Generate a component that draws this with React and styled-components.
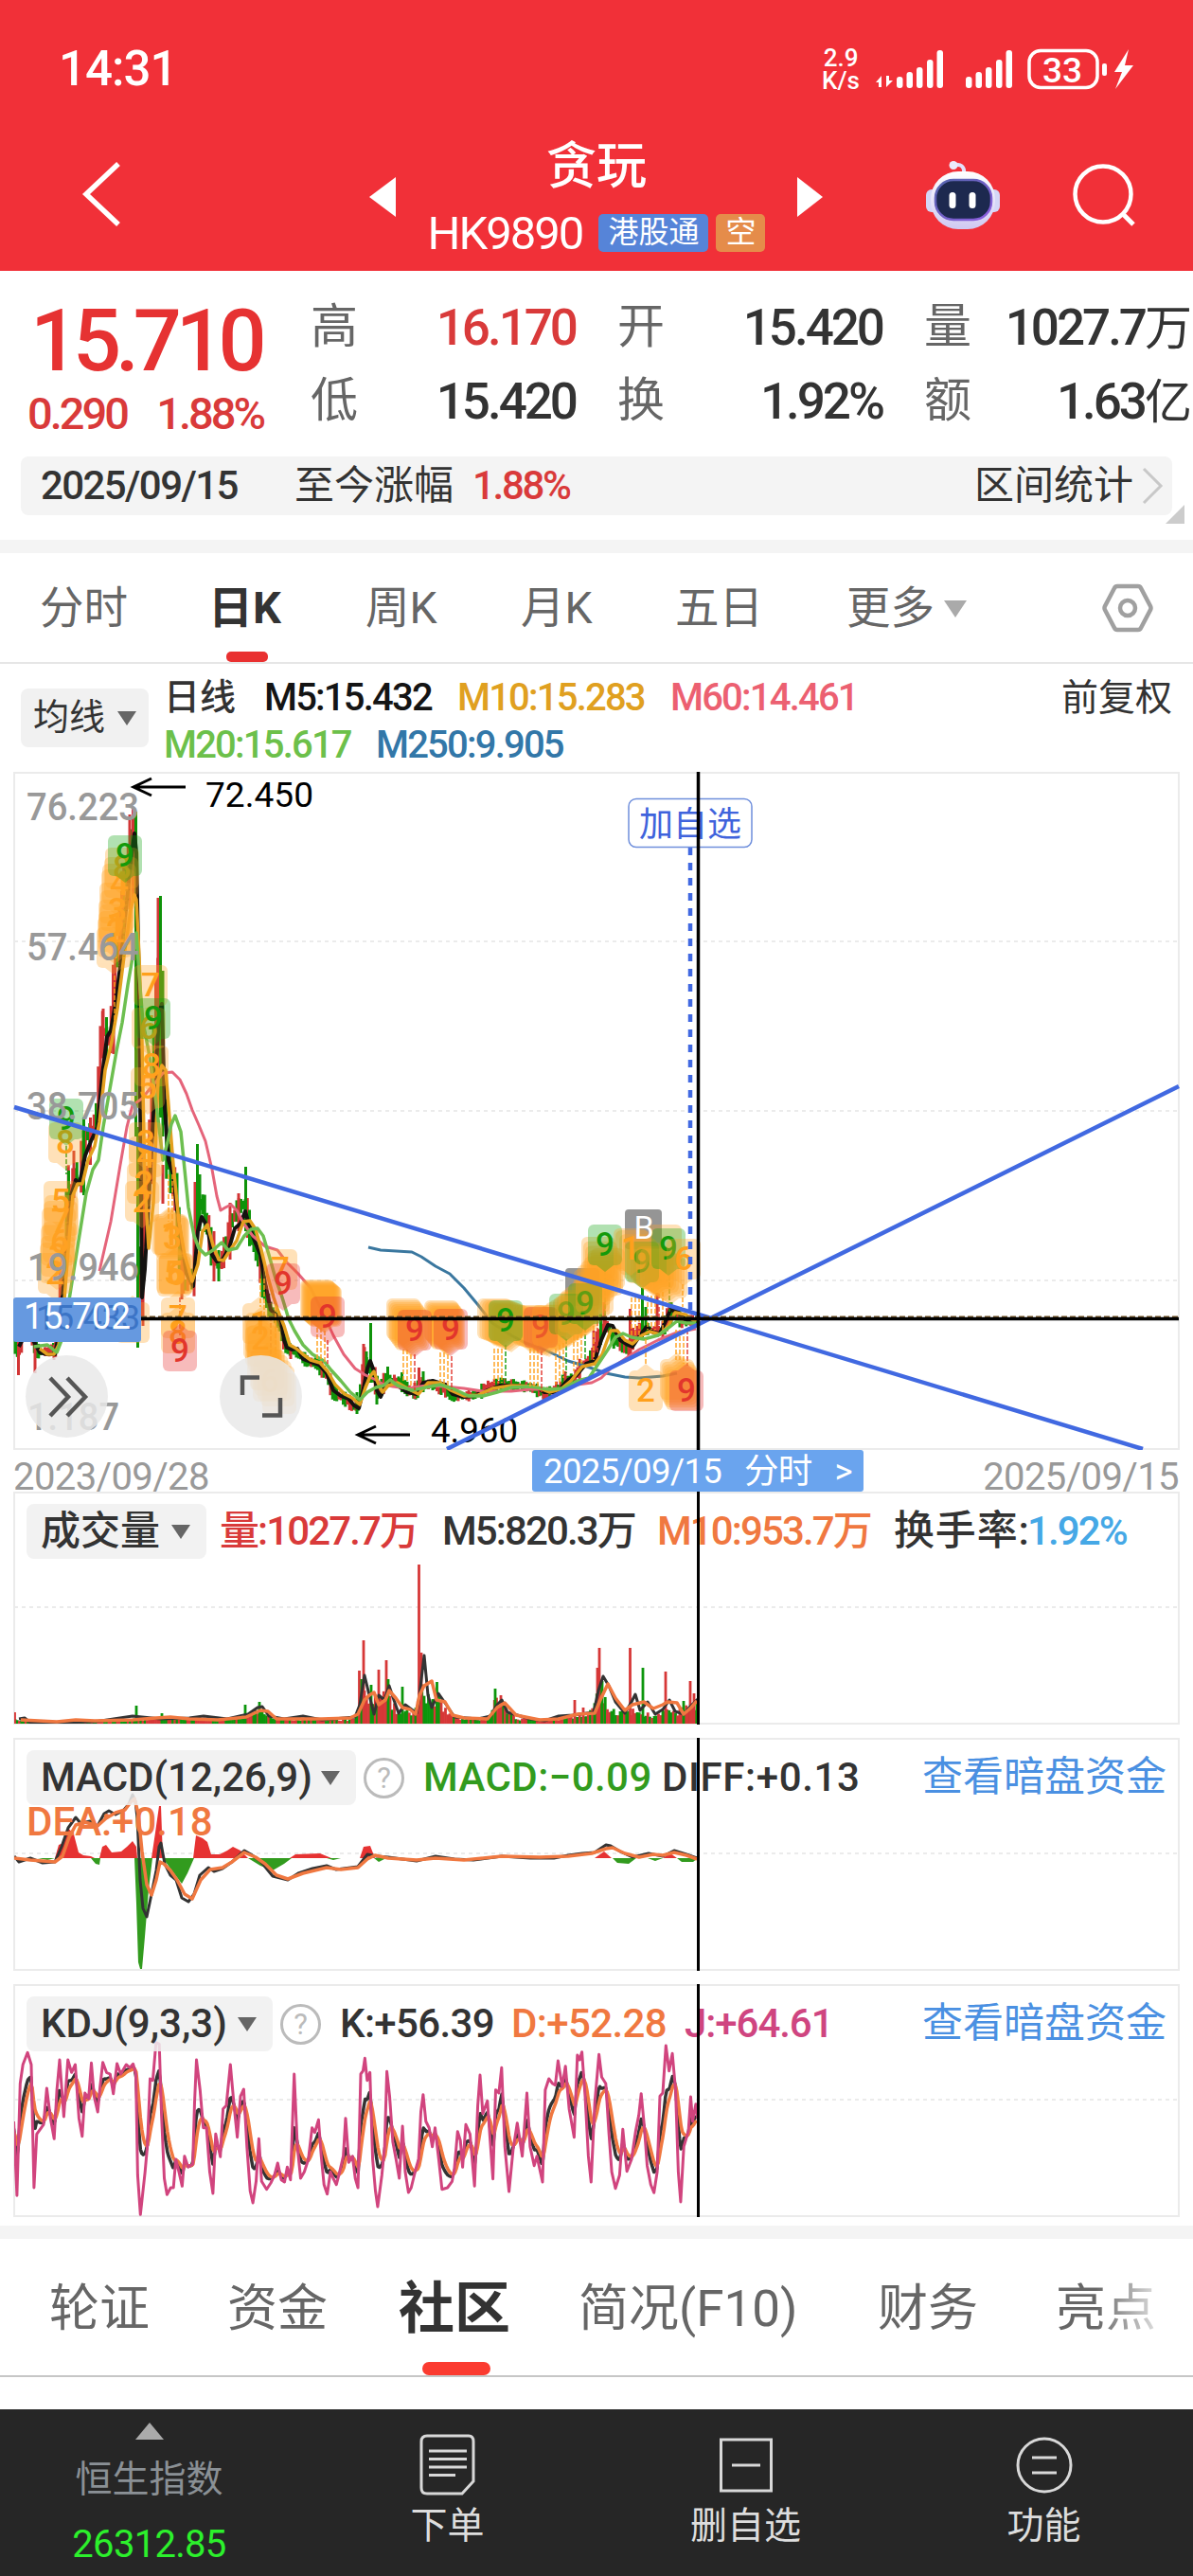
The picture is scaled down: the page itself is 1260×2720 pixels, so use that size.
import styled, { createGlobalStyle, css } from "styled-components";

const GlobalStyle = createGlobalStyle`
  * {
    box-sizing: border-box;
  }

  body {
    margin: 0;
    background: #fff;
    font-family: Roboto, "Noto Sans CJK SC", sans-serif;
    line-height: 1.2;
    color: #333;
  }
`;

/* ---------- data ---------- */

const stats = [
    { name: "高", value: "16.170", up: true },
    { name: "开", value: "15.420" },
    { name: "量", value: "1027.7", unit: "万" },
    { name: "低", value: "15.420" },
    { name: "换", value: "1.92%" },
    { name: "额", value: "1.63", unit: "亿" },
];

const periods = ["分时", "日K", "周K", "月K", "五日", "更多"];

const sections = ["轮证", "资金", "社区", "简况(F10)", "财务", "亮点"];

const axisLabels = [
    { text: "76.223", x: 28, y: 866, w: 119 },
    { text: "57.464", x: 28, y: 1014, w: 119 },
    { text: "38.705", x: 28, y: 1182, w: 119 },
    { text: "19.946", x: 29, y: 1352, w: 118 },
    { text: "1.187", x: 29, y: 1510, w: 97 },
];

const pricePath = [
    [16, 1412], [20, 1428], [24, 1410], [33, 1412], [38, 1425], [42, 1428], [50, 1427], [58, 1425],
    [61, 1405], [64, 1370], [68, 1330], [72, 1262], [76, 1258], [80, 1235], [84, 1250], [88, 1212],
    [92, 1200], [96, 1195], [100, 1190], [104, 1160], [106, 1120], [109, 1085], [112, 1095], [116, 1098],
    [119, 1075], [121, 1035], [125, 1000], [130, 955], [135, 910], [138, 892], [141, 885], [143, 910],
    [144, 1040], [145, 1330], [148, 1390], [150, 1340], [153, 1290], [157, 1240], [160, 1190], [164, 1110],
    [167, 1040], [170, 1070], [173, 1150], [176, 1210], [180, 1225], [186, 1265], [190, 1320], [195, 1358],
    [204, 1350], [208, 1285], [213, 1268], [218, 1290], [225, 1328], [233, 1335], [240, 1312], [245, 1290],
    [252, 1275], [258, 1272], [264, 1300], [272, 1322], [276, 1348], [284, 1380], [295, 1398], [300, 1415],
    [306, 1425], [315, 1430], [325, 1438], [335, 1440], [345, 1452], [352, 1470], [360, 1475], [368, 1480],
    [374, 1486], [378, 1484], [383, 1458], [386, 1436], [390, 1445], [395, 1455], [400, 1470], [408, 1457],
    [420, 1458], [430, 1467], [438, 1472], [445, 1462], [455, 1462], [470, 1468], [480, 1474], [495, 1474],
    [505, 1472], [515, 1465], [530, 1461], [545, 1463], [560, 1465], [575, 1472], [585, 1469], [592, 1464],
    [597, 1457], [605, 1457], [615, 1442], [628, 1430], [634, 1408], [640, 1398], [648, 1415], [655, 1420],
    [663, 1426], [668, 1415], [677, 1402], [690, 1405], [700, 1405], [707, 1388], [712, 1384], [720, 1395],
    [737, 1394],
];

// x, top, bottom, rising
const spikes = [
    [19.5, 1405, 1452, 1], [37, 1420, 1450, 1], [57, 1420, 1436, 1], [72.5, 1236, 1275, 0], [78, 1215, 1265, 1],
    [88.5, 1180, 1262, 0], [95.5, 1180, 1230, 1], [109, 1065, 1110, 1], [112.5, 1074, 1122, 0], [120, 1065, 1113, 1],
    [137, 860, 960, 1], [140.5, 852, 950, 1], [143.5, 857, 1200, 0], [145.5, 1190, 1423, 0], [151, 1240, 1400, 1],
    [167, 948, 1140, 1], [169.5, 946, 1180, 0], [172, 1025, 1200, 0], [172, 1230, 1271, 1], [180, 1208, 1260, 0],
    [192, 1330, 1372, 1], [206, 1248, 1340, 1], [208.5, 1208, 1310, 0], [211, 1240, 1300, 0], [226, 1300, 1353, 1],
    [231, 1320, 1353, 0], [243, 1270, 1330, 1], [252, 1260, 1300, 1], [259.5, 1232, 1300, 0], [307, 1425, 1435, 1],
    [377, 1470, 1493, 0], [384, 1419, 1470, 1], [387, 1427, 1460, 0], [391.5, 1397, 1460, 0], [398, 1455, 1483, 0],
    [409.5, 1443, 1465, 0], [424.5, 1449, 1470, 0], [438, 1460, 1477, 1], [442.5, 1444, 1465, 1], [447, 1448, 1470, 0],
    [574, 1465, 1480, 1], [597, 1448, 1462, 1], [627, 1405, 1440, 1], [634.5, 1388, 1420, 0], [638, 1375, 1400, 1],
    [665.5, 1382, 1420, 1], [666, 1418, 1430, 1], [678.5, 1360, 1412, 0], [682, 1380, 1410, 0], [694, 1365, 1412, 1],
    [709, 1375, 1400, 0],
];

const ma5 = "20,1422 25,1412 35,1415 42,1428 50,1430 58,1430 62,1410 66,1370 70,1320 75,1262 80,1246 84,1250 90,1220 96,1205 103,1190 108,1135 113,1095 117,1088 122,1060 127,1020 132,970 138,910 142,880 144,900 147,1050 150,1370 153,1340 158,1250 162,1180 168,1070 171,1060 174,1170 178,1225 183,1240 188,1285 193,1320 197,1345 204,1358 209,1300 213,1285 219,1295 224,1325 229,1332 235,1330 242,1318 248,1297 254,1292 259,1279 265,1300 270,1313 275,1325 280,1355 286,1383 293,1390 297,1400 300,1415 303,1423 308,1425 314,1424 320,1435 328,1438 337,1441 345,1450 352,1468 360,1474 368,1477 374,1484 379,1487 384,1466 388,1445 391,1437 395,1448 398,1468 402,1475 406,1466 412,1460 420,1463 430,1470 440,1472 447,1460 457,1458 470,1462 478,1472 490,1475 500,1474 515,1468 528,1463 540,1463 552,1464 565,1464 575,1470 588,1470 600,1457 609,1452 619,1440 628,1437 635,1415 642,1399 647,1400 655,1415 663,1420 668,1422 676,1410 683,1401 690,1407 697,1408 703,1395 708,1383 716,1385 725,1395 735,1394";
const ma10 = "42,1424 50,1430 57,1430 62,1420 67,1385 72,1320 77,1262 82,1250 87,1250 93,1225 100,1210 105,1185 111,1130 118,1100 124,1065 131,1010 138,960 142,945 144,950 147,1010 150,1100 153,1250 157,1318 162,1270 167,1140 171,1125 175,1130 179,1180 183,1230 189,1290 195,1325 203,1353 209,1335 214,1300 219,1293 225,1315 231,1330 236,1331 243,1320 250,1310 257,1290 264,1289 270,1298 276,1320 282,1345 289,1370 294,1385 300,1400 306,1420 313,1424 320,1430 328,1436 338,1439 346,1448 354,1462 364,1472 372,1476 380,1483 386,1465 391,1453 395,1448 399,1460 404,1470 410,1463 420,1460 432,1467 442,1472 452,1460 465,1460 476,1468 490,1474 505,1473 520,1466 540,1463 565,1464 580,1470 592,1467 603,1458 615,1443 628,1440 636,1430 645,1405 652,1405 660,1415 668,1419 678,1410 686,1406 697,1409 706,1400 713,1386 724,1388 735,1396";
const ma20 = "36,1422 50,1420 60,1428 67,1410 75,1360 83,1310 91,1260 98,1235 104,1225 109,1190 116,1150 123,1110 129,1080 135,1040 141,1005 144,985 147,1030 151,1080 157,1110 163,1150 168,1190 172,1225 176,1210 181,1187 185,1178 191,1195 195,1235 199,1275 205,1305 210,1318 217,1325 225,1320 234,1312 241,1320 250,1318 258,1305 265,1298 272,1297 278,1305 284,1325 291,1350 298,1370 305,1393 311,1405 320,1420 330,1430 342,1437 350,1447 360,1458 370,1470 380,1478 388,1470 397,1465 405,1463 412,1457 420,1463 435,1468 450,1465 465,1462 480,1467 495,1474 510,1474 525,1470 540,1465 560,1464 580,1467 595,1466 610,1458 622,1455 632,1440 642,1425 650,1412 658,1408 667,1412 680,1414 695,1410 705,1403 715,1395 725,1397 735,1397";
const ma60 = "105,1342 117,1290 127,1230 134,1190 140,1167 150,1160 158,1150 165,1142 172,1133 182,1132 190,1140 197,1155 203,1172 210,1188 217,1205 224,1235 229,1263 233,1278 238,1275 244,1272 250,1278 258,1293 267,1305 280,1316 293,1320 303,1333 315,1345 328,1360 343,1390 352,1410 363,1430 375,1445 386,1452 397,1457 405,1462 415,1464 430,1466 450,1463 470,1464 490,1466 510,1469 540,1469 560,1467 580,1467 595,1466 610,1462 625,1460 635,1455 645,1445 660,1435 675,1425 695,1415 715,1407 735,1403";
const ma250 = "389,1317 402,1320 435,1322 445,1327 460,1337 475,1345 490,1360 505,1378 520,1397 540,1410 555,1418 575,1425 600,1437 620,1443 640,1450 660,1454 675,1455 700,1453 715,1450";

// x, y, label, kind (o orange, g green, r red)
const badges = [
    [51, 1185, "8", "o"], [52, 1160, "9", "g"],
    [40, 1323, "2", "o"], [43, 1305, "3", "o"], [45, 1290, "6", "o"], [46, 1268, "7", "o"], [47, 1262, "", "o"], [46, 1247, "5", "o"],
    [102, 979, "1", "o"], [104, 962, "2", "o"], [105, 955, "1", "o"], [106, 940, "3", "o"], [107, 918, "", "o"], [108, 912, "4", "o"], [110, 905, "", "o"],
    [111, 895, "8", "o"], [114, 882, "9", "g"],
    [132, 1247, "2", "o"], [134, 1228, "2", "o"], [136, 1200, "4", "o"], [136, 1185, "3", "o"], [138, 1127, "5", "o"],
    [142, 1104, "8", "o"], [139, 1064, "6", "o"], [141, 1019, "7", "o"], [144, 1054, "9", "g"],
    [162, 1282, "1", "o"], [164, 1286, "3", "o"], [165, 1323, "5", "o"], [168, 1324, "6", "o"],
    [170, 1370, "7", "o"], [170, 1386, "8", "o"], [172, 1405, "9", "r"],
    [122, 1375, "", "o"],
    [256, 1376, "1", "o"], [257, 1392, "2", "o"], [259, 1400, "", "o"], [261, 1415, "", "o"], [264, 1425, "", "o"], [267, 1437, "6", "o"], [277, 1450, "", "o"],
    [278, 1319, "7", "o"], [281, 1334, "9", "r"],
];

// overlapping runs of badges: from x, y to x, y, how many
const runs = [
    [44, 1275, 42, 1312, 3], [105, 932, 103, 968, 3], [163, 1284, 160, 1282, 2], [166, 1326, 168, 1323, 2],
    [259, 1386, 262, 1406, 4], [265, 1425, 275, 1442, 4],
    [317, 1351, 325, 1358, 9], [408, 1371, 417, 1383, 7], [448, 1373, 455, 1382, 7],
    [504, 1371, 522, 1378, 8], [542, 1378, 562, 1383, 8], [568, 1380, 596, 1362, 8], [592, 1362, 612, 1345, 6],
    [606, 1340, 624, 1318, 6], [614, 1306, 622, 1325, 5], [650, 1299, 662, 1312, 4], [666, 1312, 690, 1328, 9],
    [697, 1435, 703, 1446, 5],
];

const topBadges = [
    [328, 1369, "9", "r"], [420, 1383, "9", "r"], [458, 1382, "9", "r"], [516, 1373, "9", "g"], [553, 1380, "9", "r"], [562, 1378, "", "o"],
    [580, 1366, "9", "g"], [586, 1368, "", "o"], [590, 1364, "", "o"], [600, 1355, "9", "g"], [608, 1343, "", "o"], [621, 1293, "9", "g"],
    [660, 1311, "9", "g"], [648, 1297, "1", "o"], [672, 1316, "", "o"], [676, 1318, "", "o"], [684, 1293, "", "o"], [688, 1297, "9", "g"], [704, 1308, "6", "o"],
    [664, 1447, "2", "o"], [707, 1447, "9", "r"],
];

// dashed stems that tie a badge to its candle: x, from, to, kind
const stems = [
    [70, 1210, 1240, "g"], [121, 1030, 1080, "o"], [131, 932, 1010, "g"], [190, 1370, 1410, "r"], [178, 1240, 1290, "o"], [182, 1240, 1290, "o"],
    [275, 1350, 1380, "o"], [279, 1350, 1390, "o"], [286, 1390, 1430, "r"], [291, 1380, 1430, "o"],
    [335, 1402, 1436, "o"], [339, 1402, 1438, "o"], [343, 1405, 1440, "o"], [346, 1415, 1440, "r"],
    [426, 1425, 1460, "o"], [430, 1425, 1460, "o"], [434, 1430, 1465, "o"], [438, 1430, 1468, "r"],
    [465, 1428, 1460, "o"], [469, 1428, 1462, "o"], [473, 1430, 1464, "o"], [477, 1432, 1468, "r"],
    [522, 1424, 1460, "o"], [526, 1424, 1460, "o"], [530, 1424, 1460, "o"], [534, 1420, 1460, "g"],
    [560, 1424, 1464, "o"], [564, 1424, 1464, "o"], [568, 1424, 1464, "o"], [572, 1426, 1470, "r"],
    [587, 1424, 1462, "o"], [591, 1420, 1460, "o"], [595, 1418, 1455, "o"], [598, 1414, 1450, "g"],
    [606, 1410, 1448, "o"], [610, 1410, 1444, "o"], [614, 1408, 1440, "o"], [618, 1402, 1436, "g"],
    [627, 1400, 1436, "o"], [631, 1395, 1430, "r"], [639, 1342, 1390, "g"],
    [667, 1370, 1410, "o"], [671, 1370, 1410, "o"], [675, 1370, 1410, "o"], [684, 1368, 1404, "o"], [688, 1368, 1404, "o"],
    [692, 1368, 1404, "o"], [696, 1366, 1404, "r"], [700, 1364, 1404, "o"], [707, 1347, 1385, "g"], [721, 1356, 1380, "o"],
    [682, 1414, 1440, "o"], [714, 1404, 1436, "o"], [718, 1404, 1436, "o"], [722, 1404, 1440, "o"], [726, 1404, 1442, "r"],
];

const volumeEnvelope = [
    [15, 4], [60, 2.5], [140, 4], [180, 6], [240, 5], [262, 8], [275, 14], [283, 9], [292, 5], [370, 4], [377, 10], [383, 32], [392, 26],
    [400, 26], [410, 30], [420, 12], [438, 13], [446, 34], [455, 26], [463, 26], [472, 11], [480, 6], [515, 5], [524, 24], [534, 16],
    [545, 5], [590, 5], [610, 9], [627, 14], [633, 42], [641, 20], [650, 12], [672, 13], [692, 8], [702, 14], [715, 12], [725, 16], [737, 22],
];
const volumeSpikes = [
    [15.5, 12, 1], [144, 19, 0], [171, 11, 0], [259, 20, 0], [274, 23, 0], [379.5, 56, 1], [382, 47, 0], [384, 88, 1], [392, 41, 0],
    [400, 57, 1], [408, 67, 1], [410, 47, 0], [425, 39, 0], [442.5, 168, 1], [445, 75, 1], [461.5, 44, 0], [523, 37, 0],
    [529, 30, 1], [607, 25, 1], [616, 17, 1], [631, 59, 1], [633, 80, 1], [636, 45, 0], [665.5, 80, 1], [679, 59, 0],
    [703, 55, 1], [722, 24, 0], [729, 45, 1], [733, 32, 1],
];
const volumeM5 = "20,1815 26,1814 32,1819 60,1819 100,1818 140,1812 150,1813 170,1815 200,1814 215,1812 240,1815 262,1810 272,1803 277,1802 284,1812 300,1815 320,1812 340,1816 375,1813 380,1800 385,1769 390,1790 395,1810 400,1790 406,1795 411,1780 416,1795 421,1809 428,1800 440,1809 443,1790 448,1748 452,1790 456,1803 463,1788 470,1798 480,1813 505,1815 518,1812 525,1800 530,1795 536,1808 560,1815 575,1817 590,1812 605,1811 627,1808 632,1785 637,1770 643,1780 650,1797 660,1809 667,1797 671,1789 676,1806 684,1797 692,1810 700,1805 707,1795 713,1807 722,1810 728,1803 737,1794";
const volumeM10 = "22,1816 60,1818 80,1816 100,1817 140,1816 165,1814 180,1813 200,1815 230,1816 260,1813 275,1806 283,1807 292,1815 310,1815 340,1815 370,1814 378,1810 385,1795 390,1790 395,1787 400,1800 407,1795 411,1785 418,1793 425,1803 433,1805 439,1810 443,1790 448,1780 456,1775 461,1795 470,1797 478,1811 490,1814 515,1815 525,1803 533,1798 545,1811 570,1816 590,1815 610,1810 628,1809 634,1795 642,1778 650,1793 660,1806 668,1800 680,1797 690,1804 700,1800 705,1797 715,1798 722,1810 730,1803 736,1796";

const macdUp = "58,1962 62,1948 67,1946 72,1930 78,1937 83,1956 88,1959 96,1960 100,1962 105,1962 108,1950 112,1948 118,1956 128,1955 134,1950 140,1944 144,1950 145,1962 160,1962 164,1935 168,1907 170,1907 172,1962 204,1962 207,1938 214,1941 219,1945 223,1958 232,1958 240,1954 246,1950 254,1954 262,1962 306,1962 312,1958 338,1957 350,1962 380,1962 384,1950 391,1949 396,1962 628,1962 638,1955 646,1962 700,1962 708,1957 715,1962";
const macdDown = "40,1962 50,1964 58,1962 96,1962 101,1968 105,1969 106,1962 142,1962 144,2010 146,2072 148,2079 150,2079 153,2045 157,1995 161,1962 172,1962 180,1973 192,1989 198,1978 205,1962 262,1962 275,1970 288,1975 300,1968 308,1962 345,1962 352,1964 360,1962 395,1962 400,1966 408,1962 647,1962 652,1967 664,1968 672,1962 684,1962 692,1965 700,1962 715,1962 720,1966 732,1966 737,1962";
const diffLine = "15,1960 20,1966 32,1962 45,1967 58,1966 65,1950 72,1930 80,1919 85,1925 95,1923 103,1928 110,1915 115,1912 122,1916 130,1912 136,1905 140,1895 143,1902 145,1920 148,1985 151,2015 155,2024 160,2000 165,1975 168,1950 170,1946 174,1968 180,1980 186,1985 192,2004 199,2008 205,2000 211,1980 220,1972 226,1976 235,1973 245,1966 258,1954 265,1958 275,1965 288,1981 304,1985 315,1978 330,1973 345,1970 355,1974 378,1971 388,1958 398,1960 410,1961 425,1963 440,1965 460,1960 480,1963 500,1964 530,1960 560,1962 585,1962 600,1959 615,1957 628,1956 640,1948 645,1949 655,1955 668,1961 685,1957 700,1960 712,1954 725,1958 736,1962";
const deaLine = "15,1962 32,1964 58,1966 66,1960 73,1940 80,1927 90,1924 103,1928 112,1920 122,1914 132,1911 138,1903 142,1899 146,1915 150,1955 155,1990 160,2001 165,1985 169,1966 173,1968 180,1975 187,1985 195,2000 203,2005 212,1985 222,1974 235,1972 245,1966 258,1956 270,1961 280,1968 292,1980 304,1984 320,1978 345,1972 360,1974 378,1972 388,1963 396,1959 410,1962 440,1964 460,1962 490,1964 530,1960 570,1961 600,1960 625,1957 640,1952 647,1951 660,1957 675,1961 690,1958 700,1959 712,1956 725,1959 736,1963";

const jRaw = "30,480 37,715 44,360 50,300 60,262 68,300 74,690 80,520 95,490 102,375 110,470 118,535 124,380 130,285 139,465 148,285 156,325 164,300 172,470 179,527 185,390 193,408 199,295 205,400 213,450 218,370 224,293 232,325 240,330 247,392 255,297 263,330 275,300 283,310 290,298 296,330 300,650 306,775 316,640 321,560 327,345 333,350 340,230 347,235 352,460 358,660 364,712 372,690 378,690 383,600 390,640 397,685 402,590 410,625 420,615 424,420 428,285 436,380 443,500 450,500 457,640 464,708 470,520 480,592 486,440 493,430 502,300 510,430 517,530 524,400 531,378 538,560 545,700 551,738 558,670 564,535 570,670 581,695 590,675 598,650 605,612 613,665 620,672 626,625 633,665 641,330 648,560 655,660 663,640 672,600 680,500 686,515 694,475 700,590 706,680 713,710 720,640 726,660 733,680 740,640 748,590 753,470 760,610 768,590 774,660 780,690 786,330 791,320 795,280 800,350 806,325 812,600 818,700 823,750 832,650 838,560 843,322 849,400 856,545 863,600 870,660 877,495 883,640 890,705 896,690 906,630 912,600 917,450 922,395 928,480 935,500 942,560 948,500 956,600 963,695 975,690 985,670 990,630 997,512 1003,540 1008,625 1015,490 1024,520 1034,685 1041,430 1046,333 1052,455 1062,415 1068,540 1074,662 1080,380 1087,390 1093,310 1100,560 1109,702 1118,570 1127,485 1138,590 1148,390 1155,560 1164,620 1170,590 1182,672 1188,380 1196,345 1204,360 1210,365 1216,288 1225,370 1232,305 1240,440 1251,530 1258,270 1263,285 1268,260 1275,400 1282,590 1288,672 1296,420 1305,268 1311,340 1320,360 1327,520 1333,640 1341,692 1350,650 1357,505 1366,638 1376,600 1385,510 1392,460 1397,392 1404,500 1410,620 1418,680 1425,706 1432,640 1438,400 1444,390 1451,240 1458,320 1465,265 1472,380 1478,640 1483,735 1490,560 1500,510 1505,402 1509,480 1516,425 1520,470";

/* ---------- helpers ---------- */

const noise = (n) => {
    const v = Math.sin(n * 12.9898) * 43758.5453;
    return v - Math.floor(v);
};

const at = (points, x) => {
    for (let i = 1; i < points.length; i++) {
        if (x <= points[i][0]) {
            const [x0, y0] = points[i - 1];
            const [x1, y1] = points[i];
            return y0 + ((x - x0) / (x1 - x0)) * (y1 - y0);
        }
    }
    return points[points.length - 1][1];
};

const candles = [];
for (let x = 16; x < 737; x += 2.25) {
    const y = at(pricePath, x);
    const slope = at(pricePath, x + 2) - at(pricePath, x - 2);
    const reach = Math.min(45, 4 + Math.abs(slope) * 0.55) * (0.6 + noise(x));
    const up = slope === 0 ? noise(x) > 0.5 : slope < 0 ? noise(x + 3) > 0.25 : noise(x + 3) > 0.72;
    candles.push([x, Math.max(y - reach, 856), y + reach * 0.9, up ? 1 : 0]);
}

const volumeBars = [];
for (let x = 16; x < 737; x += 2.25) {
    const h = at(volumeEnvelope, x) * (0.65 + noise(x) * 0.6);
    volumeBars.push([x, h, noise(x * 2) > 0.5 ? 1 : 0]);
}

const jPoints = jRaw.split(" ").map((p) => p.split(",").map(Number));
const toPoint = (x, y) => `${(x / 2.063).toFixed(1)},${(2080 + y / 3).toFixed(1)}`;
const jLine = jPoints.map(([x, y]) => toPoint(x, y)).join(" ");
const kPoints = [];
const dPoints = [];
let d = 520;
for (let x = 30; x <= 1520; x += 3.1) {
    const j = at(jPoints, x);
    d = (6 * d + j) / 7;
    dPoints.push(toPoint(x, d));
    kPoints.push(toPoint(x, (j + 2 * d) / 3));
}

const badgeColors = {
    o: { fill: "#ffa426", opacity: 0.32, text: "#ffa01c" },
    g: { fill: "#10a510", opacity: 0.32, text: "#139a0a" },
    r: { fill: "#e93030", opacity: 0.32, text: "#e2352c" },
};

/* ---------- chart pieces ---------- */

const Badge = ({ x, y, label, kind }) => {
    // the tip points at the candle the badge belongs to
    const below = y > at(pricePath, x + 18);
    const tip = below
        ? `M${x + 9} ${y}L${x + 18} ${y - 7}L${x + 27} ${y}Z`
        : `M${x + 9} ${y + 43}L${x + 18} ${y + 50}L${x + 27} ${y + 43}Z`;

    return (
        <g>
            <g fill={badgeColors[kind].fill} opacity={badgeColors[kind].opacity}>
                <rect x={x} y={y} width="36" height="43" rx="6" />
                <path d={tip} />
            </g>
            {label && (
                <text x={x + 18} y={y + 33} textAnchor="middle" fontSize="35" fontWeight="500" fill={badgeColors[kind].text}>
                    {label}
                </text>
            )}
        </g>
    );
};

const Line = ({ points, color, width = 3 }) => (
    <polyline points={points} fill="none" stroke={color} strokeWidth={width} strokeLinejoin="round" />
);

const PriceChart = () => (
    <ChartSvg viewBox="0 815 1260 716">
        <rect x="15" y="816" width="1230" height="714" fill="none" stroke="#ebebeb" strokeWidth="2" />
        {[994, 1173, 1352].map((y) => (
            <line key={y} x1="15" x2="1245" y1={y} y2={y} stroke="#ebebeb" strokeWidth="2" strokeDasharray="4 4" />
        ))}
        {[...candles, ...spikes].map(([x, top, bottom, up], i) => (
            <rect key={i} x={x - 1.5} y={top} width="3" height={bottom - top} fill={up ? "#d23535" : "#0f930a"} />
        ))}
        <Line points={ma5} color="#141210" width={4} />
        <Line points={ma250} color="#3a779f" />
        <Line points={ma60} color="#e5647a" />
        <Line points={ma10} color="#e3a01f" width={3.5} />
        <Line points={ma20} color="#6dbf50" width={3.5} />
        <rect x="597" y="1339" width="36" height="40" rx="4" fill="#959595" />
        {stems.map(([x, y1, y2, kind], i) => (
            <line key={i} x1={x} x2={x} y1={y1} y2={y2} stroke={badgeColors[kind].text} strokeWidth="1.4" strokeDasharray="5 2" />
        ))}
        {badges.map(([x, y, label, kind], i) => (
            <Badge key={i} x={x} y={y} label={label} kind={kind} />
        ))}
        <rect x="660" y="1277" width="39" height="42" rx="4" fill="#959595" />
        {runs.map(([x0, y0, x1, y1, count], r) =>
            Array.from({ length: count }, (_, i) => (
                <Badge key={`${r}-${i}`} x={x0 + ((x1 - x0) * i) / (count - 1)} y={y0 + ((y1 - y0) * i) / (count - 1)} kind="o" />
            ))
        )}
        {topBadges.map(([x, y, label, kind], i) => (
            <Badge key={i} x={x} y={y} label={label} kind={kind} />
        ))}
        <text x="680" y="1308" textAnchor="middle" fontSize="34" fill="#fff">B</text>

        {axisLabels.map(({ text, x, y, w }) => (
            <text key={text} x={x} y={y} textLength={w} lengthAdjust="spacingAndGlyphs" fontSize="41" fontWeight="500" fill="#999">
                {text}
            </text>
        ))}
        <rect x="14" y="1370" width="135" height="47" rx="3" fill="#6699e0" />
        <text x="38" y="1404" textLength="110" lengthAdjust="spacingAndGlyphs" fontSize="37" fill="#3b74c6">15.433</text>
        <text x="25" y="1403" textLength="113" lengthAdjust="spacingAndGlyphs" fontSize="38" fill="#fff">15.702</text>

        <g stroke="#000" strokeWidth="3" fill="none">
            <path d="M196 831H141M160 822L141 831L160 840" />
            <path d="M433 1515H378M397 1506L378 1515L397 1524" />
        </g>
        <text x="217" y="852" textLength="114" lengthAdjust="spacingAndGlyphs" fontSize="37" fill="#000">72.450</text>
        <text x="455" y="1523" textLength="92" lengthAdjust="spacingAndGlyphs" fontSize="37" fill="#000">4.960</text>

        <line x1="729" x2="729" y1="895" y2="1387" stroke="#4169e1" strokeWidth="4.5" strokeDasharray="8 8" />
        <rect x="664" y="843.5" width="130" height="51" rx="8" fill="#fff" fillOpacity="0.8" stroke="#6f8fdc" strokeWidth="1.5" />
        <text x="729" y="883" textAnchor="middle" fontSize="36" fill="#3f63dc">加自选</text>

        <path d="M15 1169L1207 1530M472 1530L1245 1147" stroke="#4169e1" strokeWidth="4.5" fill="none" />
        <path d="M149 1391H1245" stroke="#76592c" strokeWidth="3" strokeDasharray="6 3" />
        <path d="M149 1392.5H1245M737.5 815V1531" stroke="#000" strokeWidth="3.5" />

        <circle cx="70.5" cy="1474.5" r="43.5" fill="#e8e8e8" opacity="0.84" />
        <circle cx="275.5" cy="1474.5" r="43.5" fill="#e8e8e8" opacity="0.84" />
        <g fill="none" stroke="#555" strokeWidth="4.5">
            <path d="M53 1455L72 1475L53 1495M71 1455L90 1475L71 1495" />
            <path d="M256 1473V1454.500H274M296 1476V1494.500H277" />
        </g>
    </ChartSvg>
);

const VolumeChart = () => (
    <PanelSvg viewBox="15 1575 1230 245">
        <line x1="15" x2="1245" y1="1697" y2="1697" stroke="#ebebeb" strokeWidth="2" strokeDasharray="4 4" />
        {[...volumeBars, ...volumeSpikes].map(([x, h, up], i) => (
            <rect key={i} x={x - 1.4} y={1820 - h} width="2.8" height={h} fill={up ? "#d63737" : "#0c960c"} />
        ))}
        <Line points={volumeM5} color="#333" />
        <Line points={volumeM10} color="#f07840" width={3.5} />
    </PanelSvg>
);

const MacdChart = () => (
    <PanelSvg viewBox="15 1835 1230 245">
        <line x1="15" x2="1245" y1="1957" y2="1957" stroke="#ebebeb" strokeWidth="2" strokeDasharray="4 4" />
        <polygon points={macdUp} fill="#e63232" />
        <polygon points={macdDown} fill="#329b1e" />
        <Line points={diffLine} color="#333" />
        <Line points={deaLine} color="#f07840" width={3.5} />
    </PanelSvg>
);

const KdjChart = () => (
    <PanelSvg viewBox="15 2095 1230 245">
        <line x1="15" x2="1245" y1="2217" y2="2217" stroke="#ebebeb" strokeWidth="2" strokeDasharray="4 4" />
        <Line points={kPoints.join(" ")} color="#333" width={3.5} />
        <Line points={dPoints.join(" ")} color="#f07840" width={3.5} />
        <Line points={jLine} color="#d1447e" />
    </PanelSvg>
);

/* ---------- icons ---------- */

const StatusIcons = () => (
    <svg width="276" height="46" viewBox="922 49 276 46">
        <g fill="#fff">
            <path d="M931 91V79L925 86H928V91ZM936 79V91L943 84H939V79Z" />
            {[[947, 80], [957.500, 75], [968, 70], [979, 62], [989.500, 52]].map(([x, y]) => (
                <rect key={x} x={x} y={y} width="6.5" height={92 - y} rx="3" />
            ))}
            {[[1020, 80], [1030.500, 75], [1041, 70], [1052, 62], [1062.500, 52]].map(([x, y]) => (
                <rect key={x} x={x} y={y} width="6.5" height={92 - y} rx="3" />
            ))}
            <rect x="1164" y="66" width="5" height="13" rx="2" />
            <path d="M1192 51L1177 75H1185L1178 93L1197 68H1188Z" />
        </g>
        <rect x="1087" y="52.500" width="72" height="39" rx="12" fill="none" stroke="#fff" strokeWidth="3.5" />
        <text x="1122" y="86" textAnchor="middle" fontSize="37" fontWeight="500" fill="#fff" textLength="42" lengthAdjust="spacingAndGlyphs">33</text>
    </svg>
);

const RobotIcon = () => (
    <svg width="82" height="76" viewBox="976 167 82 76">
        <defs>
            <linearGradient id="shell" x1="0" y1="0" x2="0" y2="1">
                <stop offset="0" stopColor="#fff" />
                <stop offset="1" stopColor="#cfc9f2" />
            </linearGradient>
            <linearGradient id="visor" x1="0" y1="0" x2="1" y2="1">
                <stop offset="0" stopColor="#5566ad" />
                <stop offset="1" stopColor="#8d5ce0" />
            </linearGradient>
        </defs>
        <path d="M1018 182C1019 175 1014 171 1008 174" fill="none" stroke="#e3e0fa" strokeWidth="4" />
        <circle cx="1007" cy="173.500" r="4.500" fill="#eceafb" />
        <rect x="978" y="199" width="13" height="24" rx="6" fill="#d4d6f7" />
        <rect x="1043" y="199" width="13" height="24" rx="6" fill="#d4d6f7" />
        <rect x="983" y="180" width="68" height="61" rx="29" fill="url(#shell)" />
        <rect x="988" y="189" width="59" height="42" rx="19" fill="#1d294f" stroke="url(#visor)" strokeWidth="2.500" />
        <rect x="1002.500" y="202" width="7" height="17" rx="3.500" fill="#fff" />
        <rect x="1023.500" y="202" width="7" height="17" rx="3.500" fill="#fff" />
    </svg>
);

/* ---------- page ---------- */

function App() {
    return (
        <Page>
            <GlobalStyle />
            <Header>
                <StatusBar>
                    <Clock>14:31</Clock>
                    <StatusRight>
                        <Speed>
                            <span>2.9</span>
                            <span>K/s</span>
                        </Speed>
                        <StatusIcons />
                    </StatusRight>
                </StatusBar>
                <NavBar>
                    <svg width="46" height="72" viewBox="85 169 46 72">
                        <path d="M125 173L91 205L125 237" fill="none" stroke="#fff" strokeWidth="5.5" />
                    </svg>
                    <Stock>
                        <svg width="28" height="42" viewBox="0 0 28 42"><path d="M0 21L28 0V42Z" fill="#fff" /></svg>
                        <StockInfo>
                            <StockName>贪玩</StockName>
                            <StockCode>
                                <span>HK9890</span>
                                <Tag $color="#5684d8">港股通</Tag>
                                <Tag $color="#e58c4a">空</Tag>
                            </StockCode>
                        </StockInfo>
                        <svg width="28" height="42" viewBox="0 0 28 42"><path d="M27 21L0 0V42Z" fill="#fff" /></svg>
                    </Stock>
                    <NavActions>
                        <RobotIcon />
                        <svg width="68" height="68" viewBox="1132 174 68 68">
                            <circle cx="1165" cy="207" r="29.500" fill="none" stroke="#fff" strokeWidth="4.500" />
                            <path d="M1186 228L1197 239" stroke="#fff" strokeWidth="5" />
                        </svg>
                    </NavActions>
                </NavBar>
            </Header>

            <Quote>
                <PriceBlock>
                    <Price>15.710</Price>
                    <Change>
                        <span>0.290</span>
                        <span>1.88%</span>
                    </Change>
                </PriceBlock>
                <Stats>
                    {stats.map(({ name, value, unit, up }) => (
                        <Stat key={name}>
                            <StatName>{name}</StatName>
                            <StatValue $up={up}>
                                {value}
                                {unit && <Unit>{unit}</Unit>}
                            </StatValue>
                        </Stat>
                    ))}
                </Stats>
            </Quote>

            <RangeBar>
                <RangeDate>2025/09/15</RangeDate>
                <RangeLabel>至今涨幅</RangeLabel>
                <RangeRate>1.88%</RangeRate>
                <RangeLink>区间统计</RangeLink>
                <svg width="24" height="40" viewBox="0 0 24 40">
                    <path d="M2 2L20 20L2 38" fill="none" stroke="#c8c8c8" strokeWidth="3" />
                </svg>
                <Corner />
            </RangeBar>

            <Band />

            <Periods>
                {periods.map((name) => (
                    <Period key={name} $active={name === "日K"}>
                        {name}
                        {name === "更多" && <Caret $color="#aaa" $size={24} />}
                    </Period>
                ))}
                <svg width="54" height="52" viewBox="0 0 54 52">
                    <g fill="none" stroke="#a0a0a0" strokeWidth="4.5">
                        <path d="M16 3H38Q40 3 41 5L51 24Q52 26 51 28L41 47Q40 49 38 49H16Q14 49 13 47L3 28Q2 26 3 24L13 5Q14 3 16 3Z" />
                        <circle cx="27" cy="26" r="8" />
                    </g>
                </svg>
            </Periods>

            <Averages>
                <AverageChip>
                    均线
                    <Caret $color="#666" $size={20} />
                </AverageChip>
                <Legend>
                    <LegendRow>
                        <Reading $w={106} $size={38} $ls={0}>日线</Reading>
                        <Reading $w={204} $color="#141414">M5:15.432</Reading>
                        <Reading $w={225} $color="#e0a020">M10:15.283</Reading>
                        <Reading $color="#ec6071">M60:14.461</Reading>
                    </LegendRow>
                    <LegendRow>
                        <Reading $w={224} $color="#6cc04a">M20:15.617</Reading>
                        <Reading $color="#3277a8">M250:9.905</Reading>
                    </LegendRow>
                </Legend>
                <Adjust>前复权</Adjust>
            </Averages>

            <PriceChart />

            <Dates>
                <StartDate>2023/09/28</StartDate>
                <DateTag>
                    <span>2025/09/15</span>
                    <span>分时</span>
                    <span>&gt;</span>
                </DateTag>
                <EndDate>2025/09/15</EndDate>
            </Dates>

            <Panel>
                <VolumeChart />
                <PanelHead>
                    <Chip $w={190}>
                        成交量
                        <Caret $color="#666" $size={20} />
                    </Chip>
                    <Reading $ml={14} $w={235} $size={42} $color="#d93a3a">量:1027.7万</Reading>
                    <Reading $w={227} $size={42}>M5:820.3万</Reading>
                    <Reading $w={250} $size={42} $color="#f07840">M10:953.7万</Reading>
                    <Reading $w={141} $size={43} $ls={0.02}>换手率:</Reading>
                    <Reading $size={42} $color="#45a8e6">1.92%</Reading>
                </PanelHead>
                <Cursor />
            </Panel>

            <Panel>
                <MacdChart />
                <PanelHead>
                    <Chip $w={348}>
                        MACD(12,26,9)
                        <Caret $color="#666" $size={20} />
                    </Chip>
                    <HelpMark>?</HelpMark>
                    <Reading $ml={20} $w={252} $size={42} $ls={0.01} $color="#329b1e">MACD:−0.09</Reading>
                    <Reading $size={42} $ls={0.015}>DIFF:+0.13</Reading>
                    <MoneyLink>查看暗盘资金</MoneyLink>
                </PanelHead>
                <SecondLine>DEA:+0.18</SecondLine>
                <Cursor />
            </Panel>

            <Panel>
                <KdjChart />
                <PanelHead>
                    <Chip $w={260}>
                        KDJ(9,3,3)
                        <Caret $color="#666" $size={20} />
                    </Chip>
                    <HelpMark>?</HelpMark>
                    <Reading $ml={20} $w={181} $size={42} $ls={-0.015}>K:+56.39</Reading>
                    <Reading $w={183} $size={42} $ls={-0.015} $color="#f07840">D:+52.28</Reading>
                    <Reading $size={42} $ls={-0.025} $color="#cf4580">J:+64.61</Reading>
                    <MoneyLink>查看暗盘资金</MoneyLink>
                </PanelHead>
                <Cursor />
            </Panel>

            <BottomBand />

            <Sections>
                {sections.map((name) => (
                    <Section key={name} $active={name === "社区"} $faded={name === "亮点"}>
                        {name}
                    </Section>
                ))}
            </Sections>

            <BottomBar>
                <IndexCell>
                    <UpMark />
                    <IndexName>恒生指数</IndexName>
                    <IndexValue>26312.85</IndexValue>
                </IndexCell>
                <Action>
                    <svg width="60" height="66" viewBox="0 0 60 66" fill="none" stroke="#d8d8d8" strokeWidth="3">
                        <path d="M8 2H52Q57 2 57 8V50L45 63H8Q2 63 2 57V8Q2 2 8 2Z" />
                        <path d="M10 18H50M10 26.500H50M10 35H50M10 43.500H38" />
                    </svg>
                    <span>下单</span>
                </Action>
                <Action>
                    <svg width="60" height="66" viewBox="0 0 60 66" fill="none" stroke="#d8d8d8" strokeWidth="3">
                        <path d="M3.500 6H56.500V60H3.500ZM15 33H45" />
                    </svg>
                    <span>删自选</span>
                </Action>
                <Action>
                    <svg width="60" height="66" viewBox="0 0 60 66" fill="none" stroke="#d8d8d8" strokeWidth="3">
                        <circle cx="30" cy="33" r="28" />
                        <path d="M17 25H43M17 41H43" />
                    </svg>
                    <span>功能</span>
                </Action>
            </BottomBar>
        </Page>
    );
}

const Page = styled.div`
  width: 1260px;
  height: 2720px;
  overflow: hidden;
  display: flex;
  flex-direction: column;
  background: #fff;

  > * {
    flex-shrink: 0;
  }
`;

const Header = styled.header`
  height: 286px;
  background: #f13038;
  color: #fff;
`;

const StatusBar = styled.div`
  height: 146px;
  padding: 0 62px 0 62px;
  display: flex;
  align-items: center;
  justify-content: space-between;
`;

const Clock = styled.span`
  font-size: 51px;
  font-weight: 500;
  letter-spacing: -1px;
`;

const StatusRight = styled.div`
  display: flex;
  align-items: center;
  gap: 14px;
`;

const Speed = styled.div`
  display: flex;
  flex-direction: column;
  align-items: center;
  font-size: 26px;
  font-weight: 500;
  line-height: 24px;
`;

const NavBar = styled.div`
  height: 140px;
  padding: 0 60px 0 85px;
  display: grid;
  grid-template-columns: 305px 480px 1fr;
  align-items: center;

  > svg {
    margin-top: -22px;
  }
`;

const Stock = styled.div`
  height: 140px;
  display: flex;
  justify-content: space-between;

  > svg {
    margin-top: 41px;
  }
`;

const StockInfo = styled.div`
  display: flex;
  flex-direction: column;
  align-items: center;
`;

const StockName = styled.div`
  height: 60px;
  line-height: 60px;
  font-size: 53px;
  font-weight: 500;
`;

const StockCode = styled.div`
  display: flex;
  align-items: center;
  gap: 8px;
  height: 82px;
  font-size: 49px;
  letter-spacing: -2px;

  > span:first-child {
    margin-right: 9px;
    padding-top: 2px;
  }
`;

const Tag = styled.span`
  height: 40px;
  padding: 0 10px;
  line-height: 39px;
  border-radius: 5px;
  background: ${({ $color }) => $color};
  font-size: 32px;
  letter-spacing: 0;
`;

const NavActions = styled.div`
  display: flex;
  align-items: center;
  justify-content: flex-end;
  gap: 74px;
  margin-top: -20px;
`;

const Quote = styled.section`
  height: 196px;
  display: flex;
`;

const PriceBlock = styled.div`
  width: 328px;
  padding: 30px 0 0 29px;
  color: #e63232;
`;

const Price = styled.div`
  padding-left: 3px;
  height: 90px;
  line-height: 90px;
  font-size: 90px;
  font-weight: 500;
  letter-spacing: -6.2px;
`;

const Change = styled.div`
  width: 249px;
  display: flex;
  justify-content: space-between;
  line-height: 60px;
  margin-top: 1px;
  font-size: 47px;
  font-weight: 500;
  letter-spacing: -3px;
  color: #d93a3a;
`;

const Stats = styled.div`
  flex: 1;
  padding-top: 20px;
  display: grid;
  grid-template-columns: 280px 280px 283px;
  grid-template-rows: 78px 78px;
  column-gap: 44px;
`;

const Stat = styled.div`
  display: flex;
  align-items: center;
  justify-content: space-between;
`;

const StatName = styled.span`
  font-size: 50px;
  color: #666;
`;

const StatValue = styled.span`
  padding-top: 4px;
  font-size: 53px;
  font-weight: 500;
  letter-spacing: -3px;
  color: ${({ $up }) => ($up ? "#d93a3a" : "#333")};
`;

const Unit = styled.span`
  font-size: 50px;
  font-weight: 400;
  letter-spacing: 0;
`;

const RangeBar = styled.div`
  position: relative;
  height: 62px;
  margin: 0 22px;
  padding: 0 8px 0 21px;
  display: flex;
  align-items: center;
  border-radius: 8px;
  background: #f4f4f4;
  font-size: 42px;
`;

const RangeDate = styled.span`
  width: 268px;
  font-weight: 500;
  letter-spacing: -1.6px;
`;

const RangeLabel = styled.span`
  width: 188px;
`;

const RangeRate = styled.span`
  font-weight: 500;
  letter-spacing: -2.3px;
  color: #d93a3a;
`;

const RangeLink = styled.span`
  margin-left: auto;
  margin-right: 9px;
`;

const Corner = styled.i`
  position: absolute;
  right: -13px;
  bottom: -9px;
  border-left: 20px solid transparent;
  border-bottom: 20px solid #ccc;
`;

const Band = styled.div`
  height: 14px;
  margin-top: 26px;
  background: #f4f4f4;
`;

const Periods = styled.nav`
  height: 117px;
  padding: 0 42px;
  display: grid;
  grid-template-columns: 181px 163px 164px 163px 181px 270px 54px;
  align-items: center;
  border-bottom: 2px solid #e6e6e6;
`;

const Period = styled.span`
  position: relative;
  height: 115px;
  padding-top: 2px;
  display: flex;
  align-items: center;
  justify-self: start;
  gap: 10px;
  font-size: 46.5px;
  color: #666;

  ${({ $active }) =>
        $active &&
        css`
      margin-left: -3px;
      color: #333;
      font-size: 47px;
      font-weight: 700;

      &::after {
        content: "";
        position: absolute;
        left: 19px;
        bottom: 0;
        width: 44px;
        height: 11px;
        border-radius: 5px;
        background: #e93030;
      }
    `}
`;

const Caret = styled.i`
  border: ${({ $size }) => $size / 2}px solid transparent;
  border-top: ${({ $size }) => $size * 0.75}px solid ${({ $color }) => $color};
  border-bottom: 0;
`;

const Averages = styled.div`
  height: 114px;
  padding: 11px 22px 0;
  display: flex;
`;

const AverageChip = styled.div`
  width: 135px;
  height: 62px;
  margin-top: 15px;
  padding: 0 13px;
  display: flex;
  align-items: center;
  justify-content: space-between;
  border-radius: 8px;
  background: #f1f1f1;
  font-size: 38px;
`;

const Legend = styled.div`
  padding-left: 16px;
`;

const LegendRow = styled.div`
  height: 50px;
  display: flex;
  align-items: center;
`;

const Reading = styled.span`
  flex: none;
  width: ${({ $w }) => ($w ? `${$w}px` : "auto")};
  margin-left: ${({ $ml = 0 }) => $ml}px;
  font-size: ${({ $size = 40 }) => $size}px;
  font-weight: 500;
  letter-spacing: ${({ $ls = -0.045 }) => $ls}em;
  white-space: nowrap;
  color: ${({ $color = "#333" }) => $color};
`;

const Adjust = styled.span`
  height: 50px;
  line-height: 50px;
  margin-left: auto;
  font-size: 39px;
`;

const ChartSvg = styled.svg`
  display: block;
  width: 1260px;
  height: 716px;
`;

const Dates = styled.div`
  height: 44px;
  padding: 0 15px;
  display: flex;
  align-items: center;
  line-height: 44px;
  font-size: 40px;
  letter-spacing: -0.6px;
  color: #999;
`;

const StartDate = styled.span`
  width: 547px;
  padding-top: 13px;
  margin-left: -1px;
  margin-right: 1px;
`;

const DateTag = styled.div`
  width: 350px;
  height: 44px;
  padding: 1px 12px 0;
  display: flex;
  justify-content: space-between;
  border-radius: 3px;
  background: #6aa4ee;
  color: #fff;
  font-size: 36.5px;
`;

const EndDate = styled.span`
  margin-left: auto;
  padding-top: 13px;
`;

const Panel = styled.section`
  position: relative;
  height: 246px;
  margin: 0 14px 14px;
  border: 2px solid #ebebeb;
`;

const PanelSvg = styled.svg`
  position: absolute;
  left: -1px;
  top: -2px;
  width: 1230px;
  height: 245px;
`;

const PanelHead = styled.div`
  position: relative;
  display: flex;
  align-items: center;
  padding: 11px 12px 0;
`;

const Chip = styled.div`
  width: ${({ $w }) => $w}px;
  height: 58px;
  padding: 0 17px 0 15px;
  display: flex;
  align-items: center;
  justify-content: space-between;
  border-radius: 8px;
  background: rgba(240, 240, 240, 0.85);
  font-size: 42px;
  font-weight: 500;
`;

const HelpMark = styled.span`
  width: 43px;
  height: 43px;
  margin-left: 8px;
  border: 3px solid #bbb;
  border-radius: 50%;
  text-align: center;
  line-height: 37px;
  font-size: 31px;
  color: #bbb;
`;

const MoneyLink = styled.span`
  margin-left: auto;
  font-size: 43px;
  color: #4a90e2;
`;

const SecondLine = styled.div`
  position: relative;
  height: 34px;
  padding-left: 12px;
  line-height: 35px;
  font-size: 42px;
  font-weight: 500;
  color: #f07840;
`;

const Cursor = styled.i`
  position: absolute;
  left: 720px;
  top: -2px;
  width: 3px;
  height: 246px;
  background: #000;
`;

const BottomBand = styled.div`
  height: 14px;
  margin-top: -5px;
  background: #f4f4f4;
`;

const Sections = styled.nav`
  height: 146px;
  padding-left: 52px;
  display: grid;
  grid-template-columns: 188px 181px 190px 316px 188px 1fr;
  border-bottom: 2px solid #c6c6c6;
`;

const Section = styled.span`
  position: relative;
  justify-self: start;
  height: 144px;
  line-height: 148px;
  font-size: 53px;
  color: #666;
  white-space: nowrap;

  ${({ $active }) =>
        $active &&
        css`
      color: #333;
      font-size: 59px;
      font-weight: 700;

      &::after {
        content: "";
        position: absolute;
        left: 25px;
        bottom: 0;
        width: 72px;
        height: 14px;
        border-radius: 7px;
        background: #fb3b30;
      }
    `}

  ${({ $faded }) =>
        $faded &&
        css`
      background: linear-gradient(to right, #666 40%, #ddd);
      background-clip: text;
      color: transparent;
    `}
`;

const BottomBar = styled.footer`
  height: 176px;
  margin-top: 34px;
  display: grid;
  grid-template-columns: repeat(4, 1fr);
  background: #262626;
`;

const IndexCell = styled.div`
  display: flex;
  flex-direction: column;
  align-items: center;
  padding-top: 14px;
`;

const UpMark = styled.i`
  border: 15px solid transparent;
  border-bottom: 18px solid #aaa;
  border-top: 0;
`;

const IndexName = styled.span`
  margin-top: 15px;
  line-height: 54px;
  font-size: 39px;
  color: #8a9095;
`;

const IndexValue = styled.span`
  margin-top: 17px;
  line-height: 50px;
  font-size: 40px;
  letter-spacing: -0.7px;
  color: #2cf02c;
`;

const Action = styled.div`
  display: flex;
  flex-direction: column;
  align-items: center;
  gap: 6px;
  padding-top: 26px;
  font-size: 39px;
  line-height: 50px;
  color: #ddd;
`;

export default App;
